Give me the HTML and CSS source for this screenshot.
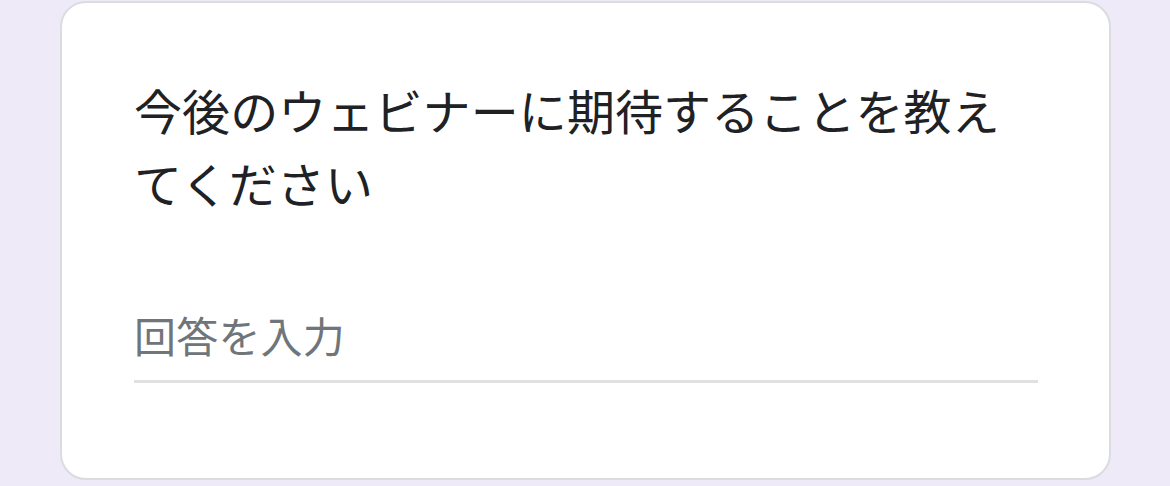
FILE: index.html
```html
<!DOCTYPE html>
<html lang="ja">
<head>
<meta charset="utf-8">
<link rel="stylesheet" href="styles.css">
</head>
<body>
<div class="page">
  <div class="card">
    <div class="title">今後のウェビナーに期待することを教えてください</div>
    <div class="answer">
      <span class="placeholder">回答を入力</span>
    </div>
  </div>
</div>
</body>
</html>
```

FILE: styles.css
```css
html, body {
  margin: 0;
  padding: 0;
  background: #eeeaf8;
}
.page {
  padding: 1px 59px 0 60px;
  display: flex;
}
.card {
  box-sizing: border-box;
  width: 1051px;
  height: 479px;
  background: #ffffff;
  border: 2px solid #dadce0;
  border-radius: 26px;
  padding: 70px 71px 0 72px;
  display: flex;
  flex-direction: column;
  font-family: "Noto Sans CJK JP", "Noto Sans", sans-serif;
}
.title {
  font-size: 48px;
  line-height: 73px;
  color: #202124;
  letter-spacing: 0.1px;
}
.answer {
  margin-top: 92px;
  padding-bottom: 21px;
  border-bottom: 3px solid #e0e0e0;
}
.placeholder {
  display: block;
  font-size: 42px;
  line-height: 48px;
  color: #70757a;
  letter-spacing: 0.2px;
}
```
